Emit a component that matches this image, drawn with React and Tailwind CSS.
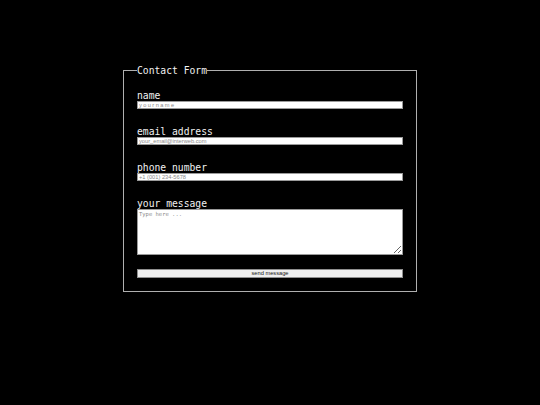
export default function App() {
  const mono = { fontFamily: '"DejaVu Sans Mono", monospace' };
  return (
    <div className="w-[540px] h-[405px] bg-black overflow-hidden" style={mono}>
      <form className="block">
        <fieldset className="mt-[65px] mx-auto w-[294px] border border-[#b0b0b0] pl-[13px] pr-[13px] pt-[14px] pb-[13px]">
          <legend className="text-[9.7px] leading-[11px] text-[#f2f2f2] px-0">Contact Form</legend>

          <label className="block h-[11px] text-[9.7px] leading-[11px] text-[#f2f2f2]">name</label>
          <input
            type="text"
            placeholder="yourname"
            className="block w-[266px] h-[8px] bg-white border border-[#9a9a9a] px-[1px] text-[5.7px] tracking-[1.4px] leading-[6px] placeholder:text-[#8a8a8a] outline-none"
            style={{ fontFamily: '"Liberation Sans", Arial, sans-serif' }}
          />

          <label className="block mt-[17px] h-[11px] text-[9.7px] leading-[11px] text-[#f2f2f2]">email address</label>
          <input
            type="email"
            placeholder="your_email@interweb.com"
            className="block w-[266px] h-[8px] bg-white border border-[#9a9a9a] px-[1px] text-[5.7px] leading-[6px] placeholder:text-[#8a8a8a] outline-none"
            style={{ fontFamily: '"Liberation Sans", Arial, sans-serif' }}
          />

          <label className="block mt-[17px] h-[11px] text-[9.7px] leading-[11px] text-[#f2f2f2]">phone number</label>
          <input
            type="tel"
            placeholder="+1 (001) 234-5678"
            className="block w-[266px] h-[8px] bg-white border border-[#9a9a9a] px-[1px] text-[5.7px] leading-[6px] placeholder:text-[#8a8a8a] outline-none"
            style={{ fontFamily: '"Liberation Sans", Arial, sans-serif' }}
          />

          <label className="block mt-[17px] h-[11px] text-[9.7px] leading-[11px] text-[#f2f2f2]">your message</label>
          <textarea
            placeholder="Type here ..."
            className="block w-[266px] h-[46px] bg-white border border-[#9a9a9a] px-[1px] py-[1px] text-[5.5px] leading-[7px] placeholder:text-[#8a8a8a] outline-none"
            style={mono}
          />

          <button
            type="button"
            className="block mt-[14px] w-[266px] h-[9px] bg-[#efefef] border border-[#8f8f8f] text-[5.7px] leading-[7px] text-[#111]"
            style={{ fontFamily: '"Liberation Sans", Arial, sans-serif' }}
          >
            send message
          </button>
        </fieldset>
      </form>
    </div>
  );
}
